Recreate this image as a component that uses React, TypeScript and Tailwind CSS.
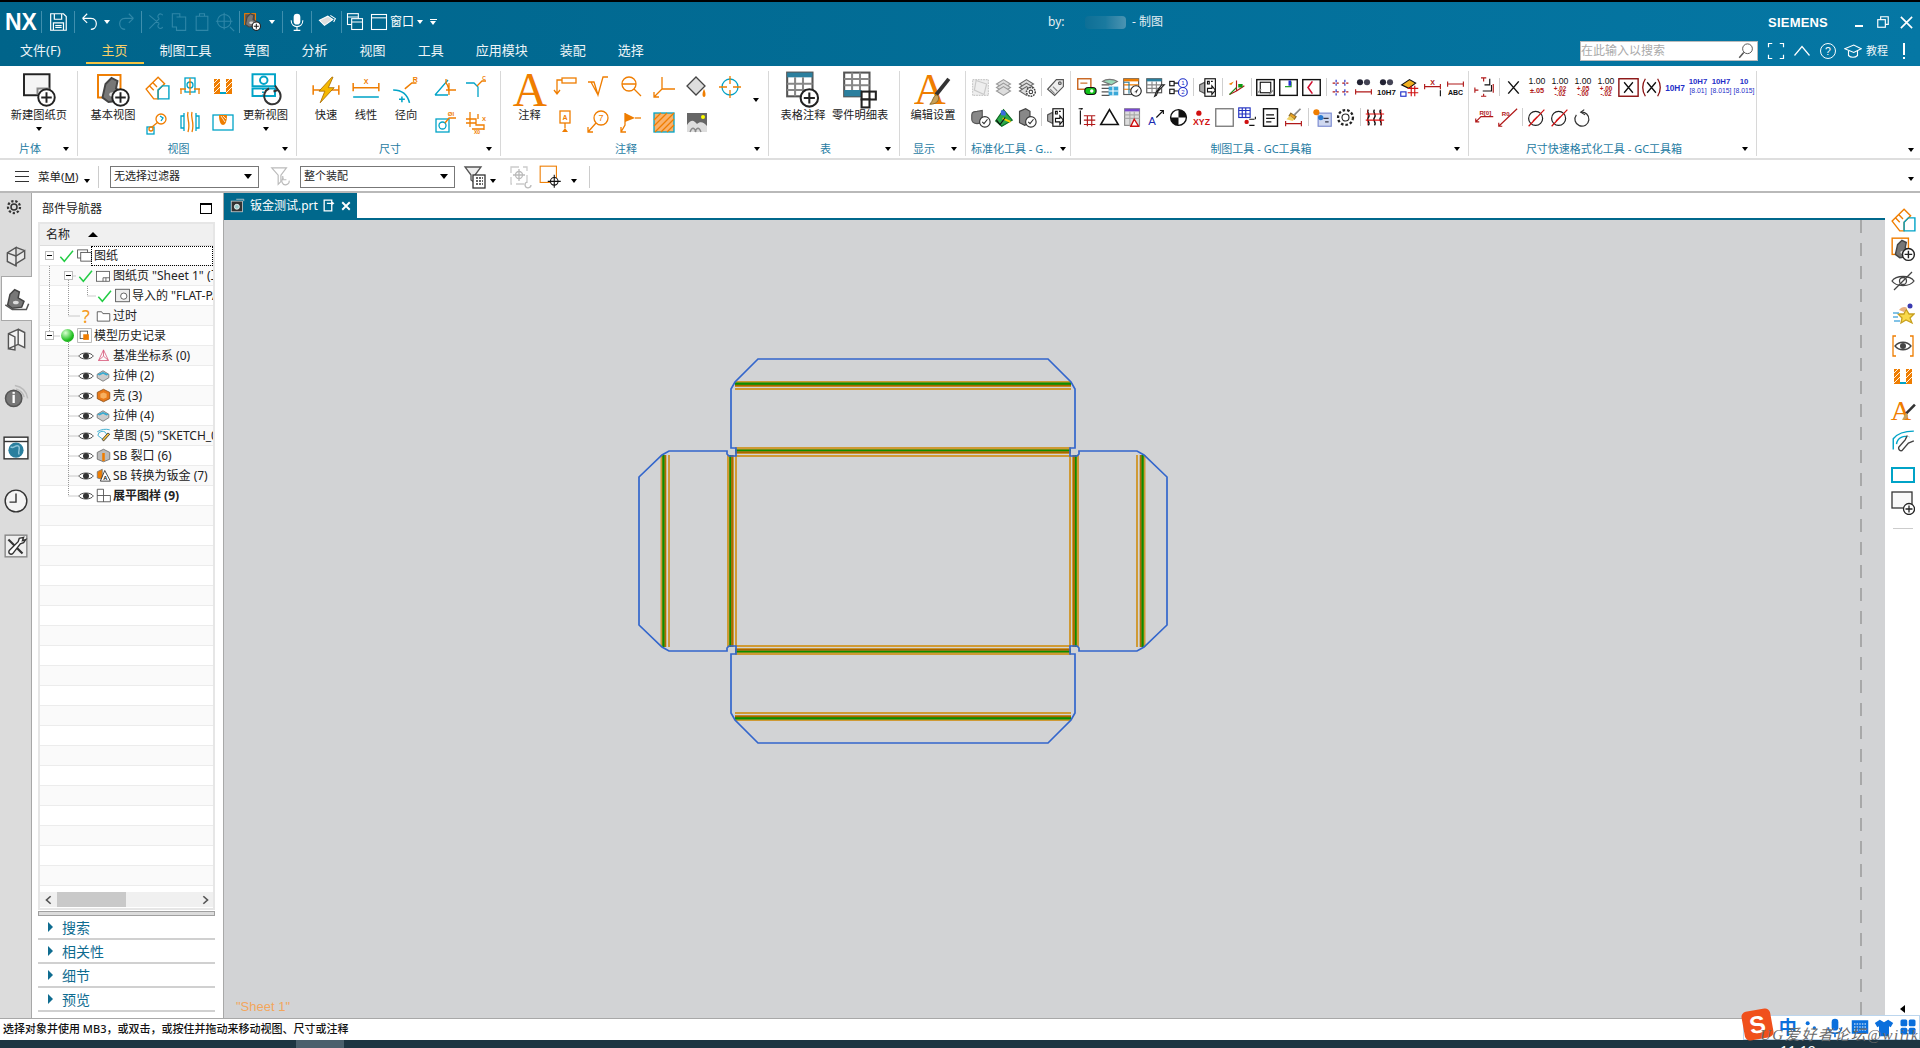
import type { ReactNode } from "react";

const OR = "#ef7d00";
const CY = "#00a3c7";
const RD = "#b01818";
const BL = "#1f2fc8";

function S({ s = 24, w, h, vb = 24, children }: { s?: number; w?: number; h?: number; vb?: number; children: ReactNode }) {
  return (
    <svg width={w ?? s} height={h ?? s} viewBox={`0 0 ${vb} ${vb}`} fill="none" strokeWidth={1.3} className="shrink-0">
      {children}
    </svg>
  );
}

function Tx({ x, y, size = 7, fill = "#111", bold = true, serif, children }: { x: number; y: number; size?: number; fill?: string; bold?: boolean; serif?: boolean; children: ReactNode }) {
  return (
    <text x={x} y={y} fontSize={size} fill={fill} fontWeight={bold ? 700 : 400} textAnchor="middle" fontFamily={serif ? "Liberation Serif, serif" : "Liberation Sans, sans-serif"}>
      {children}
    </text>
  );
}

function Plus({ cx = 17, cy = 17, r = 6 }: { cx?: number; cy?: number; r?: number }) {
  return (
    <g>
      <circle cx={cx} cy={cy} r={r} fill="#fff" stroke="#222" />
      <path d={`M${cx - r + 2} ${cy}H${cx + r - 2}M${cx} ${cy - r + 2}V${cy + r - 2}`} stroke="#222" />
    </g>
  );
}

function Part({ x = 0, y = 0 }: { x?: number; y?: number }) {
  return (
    <g transform={`translate(${x} ${y})`}>
      <path d="M3 15 L5 6 L9 2 L13 4 L12 9 L17 12 L15 17 L7 18Z" fill="#777" stroke="#444" />
      <ellipse cx="10" cy="13" rx="2.5" ry="1.5" fill="#ddd" />
    </g>
  );
}

function Tri({ color = "border-t-black" }: { color?: string }) {
  return <span className={`inline-block w-0 h-0 border-x-[3px] border-t-[4px] border-x-transparent ${color}`} />;
}

// ---- top bar icons
const Sav = (
  <S s={22}>
    <path d="M4 3H18L21 6V21H4Z M8 3V9H16V3 M7 21V13H18V21 M9 16H16M9 18H16" stroke="#fff" />
  </S>
);
const Undo = (c: string, flip = false) => (
  <S s={22}>
    <path d={flip ? "M19 8L14 3M19 8L14 13M19 8H10C5 8 4 12 4 14C4 18 7 20 10 20" : "M5 8L10 3M5 8L10 13M5 8H14C19 8 20 12 20 14C20 18 17 20 14 20"} stroke={c} />
  </S>
);
const dim = "#2f87a8";

// ---- ribbon big icons
const NewSheet = (
  <S s={36}>
    <rect x="2" y="1.5" width="17" height="14" fill="#f4f4f4" stroke="#222" />
    <path d="M11 15V11H19" stroke="#888" />
    <Plus cx={17} cy={17} r={5.5} />
  </S>
);
const BaseView = (
  <S s={36}>
    <rect x="2" y="2" width="15" height="15" stroke={OR} />
    <Part x={2} y={2} />
    <Plus cx={17} cy={17} r={5.5} />
  </S>
);
const Update = (
  <S s={36}>
    <rect x="3" y="1.5" width="15" height="8" stroke={CY} />
    <circle cx="10.5" cy="5.5" r="2.5" stroke={CY} />
    <rect x="3" y="11" width="15" height="5" stroke={CY} />
    <path d="M10 11V16" stroke={CY} strokeDasharray="1 1" />
    <path d="M20 12A5.5 5.5 0 1 1 14 11M18 9L20 12L17 13" stroke="#333" />
  </S>
);
const Rapid = (
  <S w={32} h={28}>
    <path d="M1 12H23M1 8V16M23 8V16" stroke={OR} />
    <path d="M17 1L6 13H11L7 23L19 10H14L18 1Z" fill="#f5b800" stroke="#a86b00" strokeWidth="0.7" />
  </S>
);
const Linear = (
  <S w={32} h={28}>
    <path d="M1 10H23M1 6V13M23 6V13" stroke={OR} />
    <path d="M1 18H23" stroke={CY} />
    <Tx x={12} y={7} size={6} fill={OR}>X</Tx>
  </S>
);
const Radial = (
  <S w={32} h={28}>
    <path d="M1 12C8 12 13 15 15 23" stroke={CY} />
    <path d="M6 20H11M8.5 17.5V22.5" stroke={CY} />
    <path d="M11 11L17 6H21" stroke={OR} />
    <Tx x={20} y={5} size={6} fill={OR}>R</Tx>
  </S>
);
const BigA = (
  <S s={38}>
    <Tx x={12} y={22} size={30} fill={OR} bold={false} serif>A</Tx>
  </S>
);
const TableNote = (
  <S s={38}>
    <rect x="2" y="1" width="16" height="15" fill="#fff" stroke="#555" />
    <rect x="2" y="1" width="16" height="3" fill="#2b7f9e" />
    <path d="M2 8H18M2 12H18M7 4V16M12 4V16" stroke="#888" />
    <Plus cx={16} cy={17} r={5.5} />
  </S>
);
const PartsList = (
  <S s={38}>
    <rect x="2" y="1" width="16" height="15" fill="#fff" stroke="#555" />
    <path d="M2 5H18M2 9H18M7 1V13M12 1V13" stroke="#888" />
    <rect x="2" y="12" width="11" height="4" fill="#2b7f9e" />
    <rect x="13" y="13" width="9" height="5" fill="#fff" stroke="#222" />
    <rect x="13" y="18" width="5" height="5" fill="#fff" stroke="#222" />
    <path d="M18 13V18" stroke="#222" />
  </S>
);
const EditSet = (
  <S s={38}>
    <Tx x={10} y={21} size={28} fill={OR} bold={false} serif>A</Tx>
    <path d="M22 5L14 15" stroke="#333" strokeWidth="2.4" />
    <path d="M14 15C12 16 12 19 10 21C14 21 16 19 15.5 16Z" fill="#c9a25a" stroke="#8a6a2a" strokeWidth="0.6" />
  </S>
);

// ---- ribbon small icons
const I = {
  fold: (
    <S s={26}>
      <path d="M2 13L13 2L19 8L13 14V22H9Z" stroke={OR} />
      <path d="M5 10L9 14M8 7L12 11" stroke={OR} />
      <path d="M13 22V14L17 10H23V22Z" stroke={CY} />
    </S>
  ),
  sect: (
    <S>
      <rect x="7" y="3" width="10" height="14" stroke={CY} />
      <circle cx="12" cy="10" r="3" stroke={CY} />
      <path d="M2 14H8M16 14H22M3 14V19M21 14V19M12 3V20" stroke={OR} />
    </S>
  ),
  hatch: (
    <S>
      <rect x="3" y="4" width="18" height="15" fill={OR} />
      <rect x="9" y="4" width="6" height="15" fill="#fff" />
      <rect x="9" y="17" width="6" height="2" fill={CY} />
      <path d="M3 8L7 4M3 13L9 7M3 18L9 12M15 8L19 4M15 13L21 7M15 18L21 12" stroke="#fff" strokeWidth="0.9" />
    </S>
  ),
  detail: (
    <S>
      <rect x="2" y="15" width="7" height="7" stroke={CY} />
      <circle cx="6" cy="17" r="2" stroke={OR} />
      <path d="M7 15L13 10" stroke={OR} />
      <circle cx="16" cy="7" r="5" stroke={OR} />
      <path d="M15 4L18 6L16 9" stroke={CY} />
    </S>
  ),
  brk: (
    <S>
      <path d="M6 6H3V18H6M18 6H21V18H18" stroke={CY} />
      <path d="M6 3V21M18 3V21" stroke={CY} />
      <path d="M10 2C8 8 13 12 10 22M14 2C12 8 17 12 14 22" stroke={OR} />
    </S>
  ),
  local: (
    <S>
      <rect x="2" y="5" width="20" height="15" stroke={CY} />
      <path d="M8 5C8 12 10 15 12 15C14 15 16 12 16 5Z" fill={OR} />
      <path d="M10 6L14 12M12 6L15 9" stroke="#fff" strokeWidth="0.8" />
    </S>
  ),
  angle: (
    <S>
      <path d="M2 20L15 5M2 20H15" stroke={CY} />
      <path d="M13 8C16 11 16 15 16 20M13 4V9M13 15H23M16 8V19" stroke={OR} />
    </S>
  ),
  chamfer: (
    <S>
      <path d="M2 8H10L14 12V22" stroke={CY} />
      <path d="M13 11L18 6H22" stroke={OR} />
      <Tx x={20} y={5} size={5} fill={OR}>C</Tx>
    </S>
  ),
  hole: (
    <S>
      <rect x="3" y="9" width="13" height="13" stroke={CY} />
      <circle cx="9.5" cy="15.5" r="3.5" stroke={CY} />
      <path d="M12 13L16 8H23" stroke={OR} />
      <Tx x={18} y={6} size={6} fill={OR}>ØI</Tx>
    </S>
  ),
  chain: (
    <S>
      <path d="M6 2V17M2 9H12V15H20V20M2 13H12M14 4V9M8 19H20" stroke={OR} />
      <Tx x={20} y={11} size={6} fill={OR}>X</Tx>
      <Tx x={13} y={24} size={5} fill={OR}>X0</Tx>
    </S>
  ),
  leader: (
    <S>
      <rect x="9" y="3" width="14" height="5" stroke={OR} />
      <path d="M9 5H4V19M1 15L4 19L7 15" stroke={OR} />
    </S>
  ),
  rough: (
    <S>
      <path d="M2 7H8L12 20L17 2H22M5 7L12 20" stroke={OR} />
    </S>
  ),
  mag: (
    <S>
      <circle cx="10" cy="9" r="7" stroke={OR} />
      <path d="M3 9H17M15 14L22 21" stroke={OR} />
    </S>
  ),
  datum: (
    <S>
      <path d="M10 2V14H23M10 14L2 22M2 17V22H7" stroke={OR} />
    </S>
  ),
  fill: (
    <S>
      <path d="M11 2L20 11L11 20L2 11Z" fill="#ddd" stroke="#444" />
      <path d="M19 14C17 18 17 22 19 22C21 22 21 18 19 14Z" fill={OR} />
    </S>
  ),
  target: (
    <S>
      <circle cx="12" cy="12" r="8" stroke={CY} />
      <path d="M1 12H9M15 12H23M12 1V9M12 15V23" stroke={OR} />
    </S>
  ),
  aflag: (
    <S>
      <rect x="7" y="1" width="10" height="12" stroke={OR} />
      <Tx x={12} y={10} size={7} fill={OR}>A</Tx>
      <path d="M12 13V18" stroke={OR} />
      <path d="M9 22L12 18L15 22Z" fill={OR} />
    </S>
  ),
  bal: (
    <S>
      <circle cx="15" cy="8" r="7" stroke={OR} />
      <Tx x={15} y={11} size={9} fill={OR} bold={false}>7</Tx>
      <path d="M10 13L2 22M2 17V22H7" stroke={OR} />
    </S>
  ),
  flag: (
    <S>
      <path d="M6 3V15L2 22M2 17V22H7" stroke={OR} />
      <path d="M6 3L16 8L6 12Z" fill={OR} />
      <path d="M16 8H22" stroke={OR} />
    </S>
  ),
  hatchBox: (
    <S>
      <rect x="2" y="3" width="20" height="19" fill="#f9b26c" stroke={CY} />
      <path d="M2 10L9 3M2 16L15 3M3 22L22 3M9 22L22 9M15 22L22 15" stroke={OR} />
    </S>
  ),
  image: (
    <S>
      <rect x="2" y="3" width="20" height="19" fill="#666" />
      <circle cx="18" cy="7" r="2" fill="#ff0" />
      <path d="M2 22V15C6 9 9 10 12 14C15 11 19 12 22 16V22Z" fill="#ddd" />
      <path d="M5 22C7 17 9 17 11 22M10 22C12 17 14 17 16 22" stroke="#888" />
    </S>
  ),
};

const g1 = "#c9c9c9";
const Stack = (n = 3, c = "#999") => (
  <g>
    {Array.from({ length: n }).map((_, i) => (
      <path key={i} d={`M12 ${3 + i * 4}L20 ${8 + i * 4}L12 ${13 + i * 4}L4 ${8 + i * 4}Z`} fill="#ddd" stroke={c} />
    ))}
  </g>
);
const Clip = (
  <S s={21}>
    <rect x="3" y="3" width="18" height="18" fill="#eee" stroke={g1} strokeDasharray="2 1" />
    <path d="M7 4L19 8L16 20L5 15Z" stroke={g1} />
  </S>
);
const Cog = (x: number, y: number) => (
  <g>
    <circle cx={x} cy={y} r="5" fill="#fff" stroke="#444" strokeWidth="1.8" strokeDasharray="2 1" />
    <circle cx={x} cy={y} r="2" stroke="#444" />
  </g>
);
const ChkB = (
  <g>
    <circle cx="17" cy="17" r="6" fill="#fff" stroke="#333" />
    <path d="M14 17L16 19L20 14" stroke="#333" />
  </g>
);
const Doc2 = (
  <S s={21}>
    <path d="M3 9L9 6V19L3 16Z" fill="#aaa" stroke="#555" />
    <rect x="9" y="2" width="12" height="20" fill="#fff" stroke="#111" />
    <path d="M12 13H17V10L21 15L17 20V17H12Z" fill="#fff" stroke="#111" />
    <path d="M12 5H14V8H12ZM16 5H18" stroke="#111" />
  </S>
);
const Gun = (
  <g>
    <path d="M2 9C2 5 6 5 8 5L14 4V18L8 19C4 19 2 17 2 14Z" fill="#888" stroke="#555" />
    {ChkB}
  </g>
);

const std1: ReactNode[] = [
  Clip,
  <S s={21} key="a">{Stack(3)}</S>,
  <S s={21} key="b">
    {Stack(3, "#666")}
    {Cog(17, 17)}
  </S>,
  "sep",
  <S s={21} key="c">
    <path d="M3 14L13 3H21V11L11 21Z" fill="#eee" stroke="#555" />
    <path d="M6 14L11 19M9 11L14 16" stroke="#888" />
    <circle cx="17" cy="7" r="1.5" stroke="#555" />
  </S>,
];
const std2: ReactNode[] = [
  <S s={21} key="a">{Gun}</S>,
  <S s={21} key="b">
    <path d="M3 16L12 3L22 15L10 22Z" fill="#2aa84a" stroke="#0a6a20" />
    <path d="M9 4C13 3 16 6 14 10L9 9Z" fill="#3a6ae0" />
    <path d="M11 13L20 17" stroke="#f5d000" strokeWidth="2" />
    <path d="M4 15L8 20L14 12" stroke="#111" />
  </S>,
  <S s={21} key="c">
    <path d="M4 5L11 2L16 5V18L10 21L4 18Z" fill="#888" stroke="#444" />
    {ChkB}
  </S>,
  "sep",
  <span key="d">{Doc2}</span>,
];

const G = (p: ReactNode) => <S s={21}>{p}</S>;
const frame = (c: ReactNode) => (
  <S s={21}>
    <rect x="2" y="3" width="20" height="18" fill="#fff" stroke="#111" strokeWidth="1.6" />
    {c}
  </S>
);
const Bino = (
  <g>
    <circle cx="8" cy="6" r="3.5" fill="#223" />
    <circle cx="16" cy="6" r="3.5" fill="#445" />
  </g>
);
const Dm = (y: number) => <path d={`M3 ${y}H21M3 ${y - 3}V${y + 3}M21 ${y - 3}V${y + 3}`} stroke={RD} />;

const gc1: ReactNode[] = [
  G(<g><rect x="2" y="2" width="15" height="12" fill="#fff" stroke="#c8641e" strokeWidth="1.6" /><path d="M5 7H13" stroke="#c8641e" /><rect x="10" y="12" width="13" height="8" rx="4" fill="#12c21a" stroke="#111" /><circle cx="18" cy="16" r="2" fill="#fff" /></g>),
  G(<g><path d="M4 5C8 2 16 2 21 5L14 9Z" fill="#9ad8b8" stroke="#777" /><path d="M3 9H12M3 13H12M3 17H12M3 21H12" stroke="#555" /><rect x="11" y="11" width="11" height="10" fill="#3aa8d8" /><path d="M11 16H22M16 11V21" stroke="#fff" /></g>),
  G(<g><rect x="2" y="2" width="17" height="18" fill="#fff" stroke="#555" /><rect x="2" y="2" width="17" height="3" fill={OR} /><path d="M2 9H19M2 14H19" stroke={OR} /><path d="M2 6H8V19" stroke="#2b7f9e" /><circle cx="16" cy="16" r="6" fill="#fff" stroke="#222" /><path d="M13 18L19 13L16 19L15.5 16.5Z" fill="#333" /></g>),
  G(<g><rect x="2" y="2" width="17" height="16" fill="#fff" stroke="#555" /><rect x="2" y="2" width="17" height="3" fill="#2b7f9e" /><path d="M2 9H19M2 13H19M8 5V18M13 5V18" stroke="#888" /><path d="M22 9L15 16L13 21L11 22L13 17L19 9Z" fill="#fff" stroke="#222" /></g>),
  G(<g><rect x="2" y="5" width="5" height="5" stroke="#111" /><rect x="2" y="14" width="5" height="5" stroke="#111" /><path d="M7 7H12M7 16H12" stroke="#111" /><circle cx="17" cy="7" r="5" stroke={BL} /><circle cx="17" cy="17" r="5" stroke={BL} /><Tx x={17} y={9.5} size={7} fill={BL} bold={false}>1</Tx><Tx x={17} y={19.5} size={7} fill={BL} bold={false}>2</Tx></g>),
  "sep",
  Doc2,
  "sep",
  G(<g><path d="M3 8L9 5L6 9Z" fill={OR} /><path d="M12 4V16M12 16L4 20M12 16L21 10" stroke={RD} /><rect x="14" y="8" width="5" height="4" fill="#0a9a10" /><path d="M4 20L12 12" stroke="#1a8a1a" /></g>),
  "sep",
  frame(<g><rect x="6" y="6" width="12" height="12" stroke="#111" /><path d="M3 18L7 14M16 20L21 15" stroke="#888" /></g>),
  frame(<g><path d="M15 5L15 11H8" stroke="#2ba02b" /><rect x="12" y="4" width="3" height="6" fill="#2030d0" /></g>),
  frame(<path d="M13 5L8 12L13 19" stroke="#d01030" strokeWidth="1.8" />),
  "sep",
  G(<g><path d="M3 7H10M14 7H21M3 17H10M14 17H21" stroke={RD} strokeDasharray="3 1.5" /><path d="M7 3V10M17 3V10M7 14V21M17 14V21" stroke={BL} strokeDasharray="3 1.5" /></g>),
  G(<g>{Bino}{Dm(17)}</g>),
  G(<g>{Bino}<Tx x={12} y={21} size={9}>10H7</Tx></g>),
  G(<g><path d="M3 9L12 3L19 7L11 13Z" fill="#f0b020" stroke="#111" /><path d="M14 10V22M18 10V22M10 13H22M10 18H22" stroke="#d01010" /><rect x="2" y="17" width="6" height="5" stroke={BL} /></g>),
  G(<g>{Dm(11)}<Tx x={12} y={9} size={8} fill={RD}>X</Tx><path d="M21 15V22" stroke="#111" /></g>),
  G(<g>{Dm(8)}<Tx x={12} y={21} size={8}>ABC</Tx></g>),
];
const gc2: ReactNode[] = [
  G(<g><path d="M6 1V3M3 2H8M5 4V20" stroke="#111" /><path d="M9 10H22M9 15H22M9 20H22M13 10V22M18 10V22" stroke={RD} /></g>),
  G(<path d="M12 3L22 20H2Z" fill="#fff" stroke="#111" strokeWidth="1.8" />),
  G(<g><rect x="3" y="2" width="17" height="19" fill="#ddd" stroke="#888" /><rect x="3" y="2" width="17" height="3" fill="#7a4ad0" /><path d="M3 9H20M3 13H20M9 5V21M14 5V21" stroke="#aaa" /><path d="M14 14L19 22H10Z" fill="#fff" stroke="#d01010" strokeWidth="1.6" /></g>),
  G(<g><Tx x={8} y={21} size={13} fill="#1a2ab0" bold={false}>A</Tx><path d="M13 12L21 4M17 4H21V8" stroke="#111" /></g>),
  G(<g><circle cx="12" cy="12" r="9" fill="#fff" stroke="#111" strokeWidth="1.6" /><path d="M12 12V3A9 9 0 0 1 21 12ZM12 12V21A9 9 0 0 1 3 12Z" fill="#111" /></g>),
  G(<g><circle cx="9" cy="7" r="3" fill="#d01010" /><Tx x={12} y={20} size={10} fill="#d01010">XYZ</Tx></g>),
  G(<rect x="2" y="2" width="20" height="20" fill="#fff" stroke="#777" strokeWidth="1.5" />),
  G(<g><rect x="2" y="1" width="13" height="11" fill="#fff" stroke="#2030c0" /><path d="M2 4H15M2 8H15M6 1V12M10 1V12" stroke="#2030c0" /><circle cx="11" cy="17" r="2.5" fill="#d01010" /><path d="M14 14H20M14 21H20M21 11V14" stroke="#111" /></g>),
  G(<g><rect x="4" y="2" width="16" height="20" fill="#fff" stroke="#111" strokeWidth="1.6" /><path d="M7 9H16M7 13H17M7 17H13" stroke="#111" /></g>),
  G(<g><path d="M20 2L13 9" stroke="#888" strokeWidth="2" /><path d="M9 7L15 11L13 14L7 10Z" fill="#e8a020" stroke="#8a6a2a" /><path d="M8 10L4 14L11 16L13 14Z" fill="#f0d060" />{Dm(19)}</g>),
  "sep",
  G(<g><rect x="7" y="7" width="15" height="15" fill="#cfd8f0" stroke="#7a8ad0" /><path d="M13 13H19M15 17H19" stroke="#334" /><circle cx="5" cy="6" r="3.5" fill={OR} /><circle cx="10" cy="12" r="3" fill="#2a7ad0" /></g>),
  G(<g><circle cx="12" cy="12" r="4" stroke="#222" /><circle cx="12" cy="12" r="8.5" stroke="#222" strokeWidth="2.6" strokeDasharray="3 2.2" /></g>),
  "sep",
  G(<g><path d="M5 3C2 6 8 9 5 12C2 15 8 18 5 21M12 3C9 6 15 9 12 12C9 15 15 18 12 21M19 3C16 6 22 9 19 12C16 15 22 18 19 21" stroke="#111" strokeWidth="1.6" /><path d="M2 8H23M2 15H23" stroke="#e01010" /><path d="M4 3V21M20 3V21" stroke="#e01010" strokeWidth="0.6" /></g>),
];

const Tol = (a: string, b: string, c?: string) => (
  <S s={22}>
    <Tx x={12} y={9} size={9.5} bold={false}>{a}</Tx>
    {c ? (
      <>
        <Tx x={12} y={16} size={7} fill={RD}>{b}</Tx>
        <Tx x={12} y={22} size={7} fill={RD}>{c}</Tx>
      </>
    ) : (
      <Tx x={12} y={18} size={8} fill={RD}>{b}</Tx>
    )}
  </S>
);
const Fit = (a: string, b: string) => (
  <S s={22}>
    <Tx x={12} y={9} size={8.5} fill={BL}>{a}</Tx>
    <Tx x={12} y={19} size={7.5} fill={BL} bold={false}>{b}</Tx>
  </S>
);
const Dia = (
  <g>
    <circle cx="11" cy="13" r="8" fill="#fff" stroke="#222" strokeWidth="1.4" />
    <path d="M3 22L21 3M13 11L8 16" stroke="#d01010" strokeWidth="1.4" />
  </g>
);

const dim1: ReactNode[] = [
  G(<g><path d="M12 9H18V2M10 16H20V9" stroke="#111" /><path d="M8 1H14M11 1V5M8 22H14M11 19V22M1 12V18M22 8V18M1 15H5" stroke={RD} /></g>),
  "sep",
  G(<path d="M6 5L18 19M18 5L6 19" stroke="#111" strokeWidth="1.7" />),
  Tol("1.00", "±.05"),
  Tol("1.00", "+.02", "-.02"),
  Tol("1.00", "+.05", "-.00"),
  Tol("1.00", "+.00", "-.02"),
  G(<g><rect x="1" y="2" width="22" height="20" fill="#fff" stroke="#8a1010" strokeWidth="1.6" /><path d="M7 6L17 18M17 6L7 18" stroke="#111" strokeWidth="1.5" /></g>),
  G(<g><path d="M5 2C1 8 1 16 5 22M19 2C23 8 23 16 19 22" stroke="#8a1010" strokeWidth="1.5" /><path d="M7 6L17 18M17 6L7 18" stroke="#111" strokeWidth="1.5" /></g>),
  <S s={22} key="f"><Tx x={12} y={16} size={9} fill={BL}>10H7</Tx></S>,
  Fit("10H7", "[8.01]"),
  Fit("10H7", "[8.015]"),
  Fit("10", "[8.015]"),
];
const dim2: ReactNode[] = [
  G(<g><Tx x={13} y={9} size={7} fill={RD}>R[0]</Tx><path d="M22 11H8L2 17M2 13V17H6" stroke={RD} /></g>),
  G(<g><Tx x={10} y={10} size={7} fill={RD}>R0</Tx><path d="M23 2L2 22M2 18V22H6" stroke={RD} /></g>),
  "sep",
  G(Dia),
  G(Dia),
  G(<g><path d="M14 3L10 6L15 9" stroke="#333" /><path d="M10 6A8 8 0 1 1 5 9" stroke="#333" strokeWidth="1.4" /></g>),
];

function Slot({ items }: { items: ReactNode[] }) {
  return (
    <div className="flex items-center h-[24px]">
      {items.map((it, i) =>
        it === "sep" ? (
          <div key={i} className="w-px h-[18px] bg-[#cfcfcf] mx-[2.5px]" />
        ) : (
          <div key={i} className="w-[23px] flex justify-center">
            {it}
          </div>
        ),
      )}
    </div>
  );
}

function Group({ w, label, children }: { w: string; label: string; children: ReactNode }) {
  return (
    <div className={`${w} h-[85px] flex flex-col border-r border-[#d8d8d8] shrink-0`}>
      <div className="h-[71px] flex">{children}</div>
      <div className="h-[14px] flex items-center">
        <span className="flex-1 pl-[5px] text-center text-[11px] leading-[14px] text-[#1f7ca3] whitespace-nowrap">{label}</span>
        <span className="w-[22px] flex justify-center shrink-0">
          <Tri />
        </span>
      </div>
    </div>
  );
}

function Big({ w, label, arrow, children }: { w: string; label: string; arrow?: boolean; children: ReactNode }) {
  return (
    <div className={`${w} flex flex-col items-center shrink-0`}>
      <div className="h-[37px] flex items-center justify-center">{children}</div>
      <div className="text-[11.25px] leading-[14px] whitespace-nowrap text-[#222]">{label}</div>
      {arrow && (
        <div className="mt-[3px] leading-[0]">
          <Tri />
        </div>
      )}
    </div>
  );
}

function Col({ w = "w-[33px]", children }: { w?: string; children: ReactNode }) {
  return <div className={`${w} flex flex-col items-center pt-[4px] gap-[11px] shrink-0`}>{children}</div>;
}

function Sep() {
  return <div className="w-px h-[22px] bg-[#3f8fae] shrink-0" />;
}

function TopBar() {
  const menus = ["草图", "分析", "视图", "工具", "应用模块", "装配", "选择"];
  return (
    <div className="h-[64px] bg-gradient-to-r from-[#00648a] to-[#0577a4] text-white shrink-0">
      <div className="h-[32px] flex items-center pl-[5px] pt-[8px]">
        <div className="w-[32px] text-[23px] font-bold leading-none font-['Liberation_Sans',sans-serif]">NX</div>
        <div className="ml-[4px]"><Sep /></div>
        <div className="w-[32px] flex justify-center">{Sav}</div>
        <Sep />
        <div className="w-[27px] flex justify-center">{Undo("#fff")}</div>
        <div className="w-[10px] flex justify-center"><Tri color="border-t-white" /></div>
        <div className="w-[29px] flex justify-center">{Undo(dim, true)}</div>
        <Sep />
        <div className="ml-[2px] w-[23px] flex justify-center">
          <S s={20}><path d="M4 4L16 14M4 20L16 8M16 14A3 3 0 1 0 20 18M16 8A3 3 0 1 1 20 4" stroke={dim} /></S>
        </div>
        <div className="w-[23px] flex justify-center">
          <S s={20}><path d="M4 2H13V6H20V22H9V18H4ZM9 6H13" stroke={dim} /></S>
        </div>
        <div className="w-[23px] flex justify-center">
          <S s={20}><path d="M5 5H19V22H5ZM9 5V2H15V5" stroke={dim} /></S>
        </div>
        <div className="w-[23px] flex justify-center">
          <S s={20}><circle cx="11" cy="11" r="8" stroke={dim} /><path d="M11 1V21M1 11H21M18 18L23 23" stroke={dim} /></S>
        </div>
        <div className="ml-[3px]"><Sep /></div>
        <div className="w-[26px] flex justify-center">
          <S s={20}><rect x="2" y="2" width="13" height="13" fill="#555" stroke={OR} /><Part x={0} y={0} /><Plus cx={16} cy={17} r={5} /></S>
        </div>
        <div className="w-[12px] flex justify-center"><Tri color="border-t-white" /></div>
        <div className="ml-[4px]"><Sep /></div>
        <div className="w-[28px] flex justify-center">
          <S s={20}><rect x="8" y="2" width="8" height="13" rx="4" fill="#fff" /><path d="M5 10C5 20 19 20 19 10M12 18V22M8 22H16" stroke="#fff" /></S>
        </div>
        <Sep />
        <div className="w-[29px] flex justify-center">
          <S s={20}><path d="M3 10L13 5L19 9L9 16Z" fill="#ddd" stroke="#fff" /><path d="M16 4L22 8L20 12" stroke="#fff" /></S>
        </div>
        <Sep />
        <div className="w-[26px] flex justify-center">
          <S s={20}><rect x="3" y="2" width="13" height="13" stroke="#fff" /><rect x="8" y="8" width="13" height="13" fill="#00678d" stroke="#fff" /><path d="M3 6H16M8 12H21" stroke="#fff" /></S>
        </div>
        <div className="w-[22px] flex justify-center">
          <S s={20}><rect x="3" y="3" width="18" height="18" stroke="#fff" /><path d="M3 7H21" stroke="#fff" /></S>
        </div>
        <div className="w-[24px] text-[12px] whitespace-nowrap">窗口</div>
        <div className="w-[12px] flex justify-center"><Tri color="border-t-white" /></div>
        <div className="w-[14px] flex flex-col items-center gap-[1px]">
          <div className="w-[7px] h-px bg-white" />
          <Tri color="border-t-white" />
        </div>
        <div className="ml-[608px] flex items-center text-[12px] text-[#e4eef3]">
          <span className="w-[37px]">by:</span>
          <span className="w-[41px] h-[13px] rounded-[4px] bg-gradient-to-r from-[#0d6f96] via-[#1a7a9f] to-[#4a94b2]" />
          <span className="ml-[6px] whitespace-nowrap">- 制图</span>
        </div>
        <div className="ml-auto flex items-center pr-[3px]">
          <span className="text-[13px] font-bold font-['Liberation_Sans',sans-serif] tracking-[0.2px] pt-[2px]">SIEMENS</span>
          <div className="ml-[20px] w-[22px] flex justify-center pt-[8px]"><div className="w-[8px] h-[2px] bg-white" /></div>
          <div className="ml-[2px] w-[22px] flex justify-center">
            <S s={14}><rect x="3" y="8" width="13" height="13" stroke="#fff" strokeWidth="2" /><path d="M8 8V3H21V16H16" stroke="#fff" strokeWidth="2" /></S>
          </div>
          <div className="ml-[1px] w-[22px] flex justify-center">
            <S s={15}><path d="M3 3L21 21M21 3L3 21" stroke="#fff" strokeWidth="2.6" /></S>
          </div>
        </div>
      </div>
      <div className="h-[32px] flex pl-[20px] text-[13px] text-[#eef5f8]">
        <div className="flex items-center pt-[2px] mr-[25px]">文件(F)</div>
        <div className="flex items-center justify-center w-[58px] pt-[6px] mb-[2px] border-b-2 border-[#f5c342] text-[#f7cf6a] mr-[16px]">主页</div>
        <div className="flex items-center pt-[2px]">制图工具</div>
        {menus.map((m) => (
          <div key={m} className="flex items-center pt-[2px] ml-[32px]">
            {m}
          </div>
        ))}
        <div className="ml-auto flex items-center pt-[2px]">
          <div className="w-[178px] h-[20px] bg-white border border-[#bbb] flex items-center justify-between text-[12px] text-[#aaa] pr-[2px]">
            <span>在此输入以搜索</span>
            <S s={18}><circle cx="14" cy="9" r="6.5" stroke="#555" /><path d="M9 14L3 21" stroke="#555" strokeWidth="2" /></S>
          </div>
          <div className="ml-[5px] w-[26px] flex justify-center">
            <S s={18}><path d="M2 7V2H7M17 2H22V7M2 17V22H7M17 22H22V17" stroke="#fff" strokeWidth="1.6" /></S>
          </div>
          <div className="w-[26px] flex justify-center">
            <S s={18}><path d="M2 18L12 6L22 18" stroke="#fff" strokeWidth="1.6" /></S>
          </div>
          <div className="w-[25px] flex justify-center">
            <S s={18}>
              <circle cx="12" cy="12" r="10" stroke="#fff" />
              <Tx x={12} y={17} size={14} fill="#fff" bold={false}>?</Tx>
            </S>
          </div>
          <div className="w-[26px] flex justify-center">
            <S s={18}><path d="M1 9L13 4L23 9L13 14Z M6 12V18C9 21 15 21 18 18V12" stroke="#fff" strokeWidth="1.5" /></S>
          </div>
          <div className="w-[22px] text-[11px] whitespace-nowrap">教程</div>
          <div className="w-[32px] flex flex-col items-center justify-center">
            <div className="w-[2px] h-[12px] bg-white" />
            <div className="w-[2px] h-[2px] bg-white mt-[2px]" />
          </div>
        </div>
      </div>
    </div>
  );
}

function Ribbon() {
  return (
    <div className="h-[94px] pt-[5px] bg-white border-b-2 border-[#dedede] flex shrink-0 text-[#222]">
      <Group w="w-[78px]" label="片体">
        <div className="w-[2px]" />
        <Big w="w-[76px]" label="新建图纸页" arrow>{NewSheet}</Big>
      </Group>
      <Group w="w-[219px]" label="视图">
        <div className="w-[8px]" />
        <Big w="w-[54px]" label="基本视图">{BaseView}</Big>
        <Col>{I.fold}{I.detail}</Col>
        <Col>{I.sect}{I.brk}</Col>
        <Col>{I.hatch}{I.local}</Col>
        <Big w="w-[53px]" label="更新视图" arrow>{Update}</Big>
      </Group>
      <Group w="w-[204px]" label="尺寸">
        <div className="w-[9px]" />
        <Big w="w-[40px]" label="快速">{Rapid}</Big>
        <Big w="w-[40px]" label="线性">{Linear}</Big>
        <Big w="w-[40px]" label="径向">{Radial}</Big>
        <Col w="w-[35px] pl-[3px]">{I.angle}{I.hole}</Col>
        <Col w="w-[30px]">{I.chamfer}{I.chain}</Col>
      </Group>
      <Group w="w-[268px]" label="注释">
        <div className="w-[8px]" />
        <Big w="w-[41px]" label="注释">{BigA}</Big>
        <div className="-ml-[2px] flex">
          <Col>{I.leader}{I.aflag}</Col>
          <Col>{I.rough}{I.bal}</Col>
          <Col>{I.mag}{I.flag}</Col>
          <Col>{I.datum}{I.hatchBox}</Col>
          <Col>{I.fill}{I.image}</Col>
          <Col>{I.target}</Col>
          <div className="w-[20px] flex justify-center pt-[13px]">
            <span><Tri /></span>
          </div>
        </div>
      </Group>
      <Group w="w-[131px]" label="表">
        <div className="w-[6px]" />
        <Big w="w-[56px]" label="表格注释">{TableNote}</Big>
        <div className="w-px" />
        <Big w="w-[56px]" label="零件明细表">{PartsList}</Big>
      </Group>
      <Group w="w-[66px]" label="显示">
        <Big w="w-[66px]" label="编辑设置">{EditSet}</Big>
      </Group>
      <Group w="w-[105px]" label="标准化工具 - G...">
        <div className="pl-[3px] pt-[4px] flex flex-col gap-[6px]">
          <Slot items={std1} />
          <Slot items={std2} />
        </div>
      </Group>
      <Group w="w-[398px]" label="制图工具 - GC工具箱">
        <div className="pl-[4px] pt-[4px] flex flex-col gap-[6px]">
          <Slot items={gc1} />
          <Slot items={gc2} />
        </div>
      </Group>
      <Group w="w-[288px]" label="尺寸快速格式化工具 - GC工具箱">
        <div className="pl-[4px] pt-[4px] flex flex-col gap-[6px]">
          <Slot items={dim1} />
          <Slot items={dim2} />
        </div>
      </Group>
      <div className="flex-1 h-[85px] flex items-end justify-end pr-[6px] pb-[4px]">
        <Tri />
      </div>
    </div>
  );
}

function SelectBox({ w, text }: { w: string; text: string }) {
  return (
    <div className={`${w} h-[22px] border border-[#777] bg-white flex items-center justify-between pl-[3px] pr-[6px] text-[11px] text-[#222] shrink-0`}>
      <span>{text}</span>
      <span className="border-x-[4px] border-t-[5px] border-x-transparent border-t-black" />
    </div>
  );
}

function Toolbar() {
  return (
    <div className="h-[33px] pt-[2px] bg-white border-b-2 border-[#b9b9b9] flex items-center shrink-0 text-[#222]">
      <div className="ml-[15px] w-[14px] flex flex-col gap-[4px]">
        <div className="h-px bg-[#333]" />
        <div className="h-px bg-[#333]" />
        <div className="h-px bg-[#333]" />
      </div>
      <div className="ml-[9px] w-[40px] text-[11.5px] whitespace-nowrap">菜单(<span className="underline">M</span>)</div>
      <div className="ml-[6px]"><Tri /></div>
      <div className="ml-[8px] w-px h-[22px] bg-[#ccc]" />
      <div className="ml-[11px]"><SelectBox w="w-[149px]" text="无选择过滤器" /></div>
      <div className="w-[41px] flex justify-center">
        <S s={22}><path d="M3 2H19L13 10V17L10 20V10Z" stroke="#bbb" /><path d="M22 16A4 4 0 1 1 16 13M15 11V15H19" stroke="#bbb" /></S>
      </div>
      <SelectBox w="w-[155px]" text="整个装配" />
      <div className="ml-[8px] w-[24px] flex justify-center">
        <S s={24}><path d="M2 2H18L12 10V18L8 15V10Z" fill="#eee" stroke="#555" /><rect x="10" y="10" width="12" height="13" fill="#fff" stroke="#333" /><path d="M13 13H20M13 16H20M13 19H20" stroke="#333" strokeDasharray="2 1" /></S>
      </div>
      <div className="ml-[3px]"><Tri /></div>
      <div className="ml-[10px] w-[28px] flex justify-center">
        <S s={24}><rect x="3" y="2" width="16" height="17" stroke="#ccc" strokeDasharray="8 4" /><circle cx="11" cy="10" r="3.5" stroke="#bbb" /><path d="M5 10H17M11 4V16" stroke="#bbb" /><path d="M23 20A3 3 0 1 1 19 17" stroke="#bbb" /></S>
      </div>
      <div className="ml-[3px] w-[28px] flex justify-center">
        <S s={26}><rect x="2" y="2" width="15" height="15" stroke={OR} strokeWidth="1" /><circle cx="15" cy="16" r="3.5" fill="#fff" stroke="#111" strokeWidth="1" /><path d="M15 10V22M9 16H21" stroke="#111" strokeWidth="1" /></S>
      </div>
      <div className="ml-[6px]"><Tri /></div>
      <div className="ml-[12px] w-px h-[22px] bg-[#ccc]" />
      <div className="ml-auto pr-[6px] pt-[2px] leading-[0]"><Tri /></div>
    </div>
  );
}

function Strip() {
  return (
    <div className="w-[32px] shrink-0 bg-[#dcdcdc] border-r border-[#a8a8a8] flex flex-col items-center">
      <div className="h-[28px] flex items-center pr-[3px]">
        <S s={18}><circle cx="12" cy="12" r="4" stroke="#333" strokeWidth="2" /><circle cx="12" cy="12" r="8" stroke="#333" strokeWidth="3" strokeDasharray="3 2.5" /></S>
      </div>
      <div className="h-[55px] pt-[13px] flex items-center">
        <S s={26}><path d="M4 10L12 5L12 13L20 8V15L12 20V22L4 18Z" fill="#e8e8e8" stroke="#555" /><path d="M12 5L20 8M4 10L12 13V22" stroke="#555" /></S>
      </div>
      <div className="h-[45px] w-[31px] ml-[1px] -mr-px bg-white border-y border-l border-[#a8a8a8] flex items-center justify-center relative">
        <S s={28}><Part x={1} y={2} /><path d="M2 17L8 21H20L22 16" stroke="#555" /></S>
      </div>
      <div className="h-[36px] flex items-center">
        <S s={26}><path d="M5 7L14 3V17L5 21ZM14 3L20 6V20L14 17M5 7L11 10V22L5 21" fill="#f4f4f4" stroke="#555" /></S>
      </div>
      <div className="mt-[20px] h-[38px] flex items-center">
        <S s={28}>
          <circle cx="10" cy="14" r="7" fill="#777" stroke="#555" />
          <rect x="9" y="11" width="2" height="7" fill="#fff" />
          <rect x="9" y="8.5" width="2" height="1.6" fill="#fff" />
          <path d="M11 3C17 4 21 8 22 14M12 6C15 7 18 9 19 13" stroke="#bbb" />
        </S>
      </div>
      <div className="mt-[14px] h-[38px] flex items-center">
        <S s={26}>
          <rect x="1" y="2" width="22" height="20" fill="#fff" stroke="#333" />
          <path d="M1 6H23" stroke="#333" />
          <circle cx="12" cy="14" r="7" fill="#2a7f9e" />
          <path d="M7 11C10 13 11 9 14 10C17 12 13 15 15 18" stroke="#8cc4d8" />
        </S>
      </div>
      <div className="mt-[15px] h-[38px] flex items-center">
        <S s={26}><circle cx="12" cy="12" r="10" fill="#f4f4f4" stroke="#333" /><path d="M12 5V13H6" stroke="#333" /></S>
      </div>
      <div className="mt-[7px] h-[38px] flex items-center">
        <S s={26}>
          <rect x="2" y="2" width="20" height="20" fill="#eee" stroke="#888" />
          <path d="M5 6L18 19" stroke="#333" strokeWidth="2" />
          <path d="M19 4L15 5L14 8L6 16A2 2 0 1 0 9 19L16 10L19 9L21 6L18 7Z" fill="#fff" stroke="#333" />
        </S>
      </div>
    </div>
  );
}

const Chk = <S s={16}><path d="M2 13L8 20L21 4" stroke="#22cc44" strokeWidth="2.2" /></S>;
const Eye = (
  <S s={16}>
    <path d="M1 12C5 6 19 6 23 12C19 18 5 18 1 12Z" fill="#fff" stroke="#333" />
    <circle cx="12" cy="12" r="4.5" fill="#333" />
  </S>
);
const Sheet = <S s={14}><rect x="1" y="4" width="22" height="17" fill="#fff" stroke="#444" /><path d="M12 21V15H23M17 15V21" stroke="#444" /></S>;

function Row({ pl, box, st, ic, text, bold, alt }: { pl: string; box?: boolean; st: ReactNode; ic: ReactNode; text: string; bold?: boolean; alt?: boolean }) {
  return (
    <div className={`h-[20px] shrink-0 flex items-center border-b border-[#ececec] whitespace-nowrap overflow-hidden ${pl} ${alt ? "bg-[#fafafa]" : "bg-white"}`}>
      {box !== undefined && (
        <div className="w-[16px] flex justify-center shrink-0">
          {box && (
            <div className="w-[9px] h-[9px] border border-[#bbb] bg-white flex items-center justify-center relative z-10">
              <div className="w-[5px] h-px bg-black" />
            </div>
          )}
        </div>
      )}
      <div className="w-[20px] flex justify-center shrink-0 relative z-10">{st}</div>
      <div className="w-[14px] flex justify-center shrink-0">{ic}</div>
      <span className={`ml-[3px] ${bold ? "font-bold" : ""}`}>{text}</span>
    </div>
  );
}

const feat = (
  <S s={14}><path d="M2 9L12 3L22 9V15L12 21L2 15Z" fill="#ccc" stroke="#666" /><path d="M2 9L12 5L22 9L18 11L12 8L6 11Z" fill="#3aaad0" /></S>
);

function Nav() {
  return (
    <div className="w-[192px] shrink-0 bg-white border-r border-[#a8a8a8] pl-[6px] pr-[8px] flex flex-col text-[#222]">
      <div className="h-[29px] flex items-center justify-between pl-[4px] pr-[3px] pt-[2px] shrink-0">
        <span className="text-[12px]">部件导航器</span>
        <div className="w-[12px] h-[11px] border border-black border-t-2" />
      </div>
      <div className="h-[688px] border-2 border-[#e6e6e6] flex flex-col shrink-0">
        <div className="h-[22px] bg-[#f0f0f0] flex items-center pl-[6px] text-[12px] shrink-0 border-b border-[#ddd]">
          <span>名称</span>
          <span className="ml-[18px] w-0 h-0 border-x-[5px] border-b-[5px] border-x-transparent border-b-black" />
        </div>
        <div className="flex-1 overflow-hidden relative flex flex-col text-[12px]">
          <svg width="60" height="290" className="absolute left-0 top-0 z-0" fill="none" stroke="#999" strokeDasharray="1 1">
            <path d="M9.5 10V90M9.5 10H20M9.5 90H20M28.5 30V70M28.5 30H36M28.5 70H40M28.5 90V250M28.5 110H38M28.5 130H38M28.5 150H38M28.5 170H38M28.5 190H38M28.5 210H38M28.5 230H38M28.5 250H38M47.5 40V50H56" />
          </svg>
          <div className="relative">
            <Row pl="pl-[1px]" box st={Chk} ic={<S s={15}><rect x="1" y="3" width="16" height="13" fill="#fff" stroke="#444" /><rect x="6" y="7" width="17" height="14" fill="#fff" stroke="#444" /></S>} text="图纸" />
            <div className="absolute left-[51px] right-0 top-0 h-[20px] border border-dotted border-black pointer-events-none" />
          </div>
          <Row pl="pl-[20px]" box alt st={Chk} ic={Sheet} text={'图纸页 "Sheet 1" (工作的-活动)'} />
          <Row pl="pl-[55px]" st={Chk} ic={<S s={15}><rect x="1" y="2" width="22" height="20" fill="#eee" stroke="#444" /><circle cx="14" cy="13" r="5" fill="#fff" stroke="#444" /></S>} text={'导入的 "FLAT-PATTERN"'} />
          <Row pl="pl-[36px]" alt st={<span className="text-[18px] leading-none text-[#f59a23]">?</span>} ic={<S s={15}><path d="M2 6H9L11 9H22V21H2Z" fill="#fff" stroke="#444" /></S>} text="过时" />
          <Row pl="pl-[1px]" box st={<span className="w-[13px] h-[13px] rounded-full bg-[radial-gradient(circle_at_35%_30%,#d8ffd0,#22c022_60%,#0e8a0e)]" />} ic={<S s={15}><rect x="1" y="1" width="22" height="22" fill="#fff" stroke="#aaa" /><rect x="5" y="5" width="12" height="12" stroke="#444" /><rect x="10" y="10" width="9" height="9" fill={OR} /></S>} text="模型历史记录" />
          <Row pl="pl-[36px]" alt st={Eye} ic={<S s={15}><path d="M12 3V13L4 20M12 13L20 20M4 20H20M12 3L4 20M12 3L20 20" stroke="#d8577a" /></S>} text="基准坐标系 (0)" />
          <Row pl="pl-[36px]" st={Eye} ic={feat} text="拉伸 (2)" />
          <Row pl="pl-[36px]" alt st={Eye} ic={<S s={15}><path d="M2 7L12 2L22 7V17L12 22L2 17Z" fill="#e87a1a" stroke="#8a4a10" /><path d="M7 9L12 7L17 9V15L12 17L7 15Z" fill="#f7b060" /></S>} text="壳 (3)" />
          <Row pl="pl-[36px]" st={Eye} ic={feat} text="拉伸 (4)" />
          <Row pl="pl-[36px]" alt st={Eye} ic={<S s={15}><path d="M2 6C8 2 16 1 22 3M3 12A7 7 0 1 1 12 19L3 12" stroke="#1a9fc8" /><path d="M12 21L22 10L19 8L10 18Z" fill="#f5c040" stroke="#333" /></S>} text={'草图 (5) "SKETCH_000"'} />
          <Row pl="pl-[36px]" st={Eye} ic={<S s={15}><path d="M2 7L12 2L22 7V18L12 22L2 18Z" fill="#bbb" stroke="#666" /><rect x="10" y="8" width="4" height="13" fill={OR} /></S>} text="SB 裂口 (6)" />
          <Row pl="pl-[36px]" alt st={Eye} ic={<S s={15}><path d="M2 6L10 2V18L2 16Z" fill={OR} stroke="#777" /><path d="M14 4L23 21H7Z" fill="#fff" stroke="#222" /><Tx x={15} y={19} size={9}>A</Tx></S>} text="SB 转换为钣金 (7)" />
          <Row pl="pl-[36px]" bold st={Eye} ic={<S s={15}><path d="M2 2H12V12H23V22H2Z" fill="#fff" stroke="#444" /><path d="M2 12H12V22" stroke="#444" /></S>} text="展平图样 (9)" />
          {Array.from({ length: 19 }).map((_, i) => (
            <div key={i} className={`h-[20px] shrink-0 border-b border-[#ececec] ${i % 2 ? "bg-white" : "bg-[#fafafa]"}`} />
          ))}
        </div>
        <div className="h-[15px] bg-[#f0f0f0] flex items-center shrink-0 mb-[1px]">
          <div className="w-[17px] flex justify-center">
            <S s={10}><path d="M16 3L6 12L16 21" stroke="#555" strokeWidth="4" /></S>
          </div>
          <div className="w-[69px] h-full bg-[#c9c9c9]" />
          <div className="ml-auto w-[17px] flex justify-center">
            <S s={10}><path d="M8 3L18 12L8 21" stroke="#555" strokeWidth="4" /></S>
          </div>
        </div>
      </div>
      <div className="h-[5px] mt-[1px] border border-[#a0a0a0] bg-[#dcdcdc] shrink-0" />
      {["搜索", "相关性", "细节", "预览"].map((t) => (
        <div key={t} className="h-[24px] border-b-2 border-[#d0d0d0] flex items-center pl-[10px] text-[14px] text-[#0f6c90] shrink-0">
          <span className="w-0 h-0 border-y-[5px] border-l-[5px] border-y-transparent border-l-[#0f6c90] mr-[9px]" />
          {t}
        </div>
      ))}
    </div>
  );
}

// one quarter of the flat pattern outline, the rest is mirrored around (903, 551)
const MX = 1806;
const MY = 1102;
const tl: number[][] = [
  [639, 477], [662, 455], [669, 451], [727, 451], [727, 454], [729, 456], [736, 456],
  [736, 448], [731, 448], [731, 389], [735, 382], [758, 359],
];
const outline = [
  ...tl,
  ...[...tl].reverse().map(([x, y]) => [MX - x, y]),
  ...tl.map(([x, y]) => [MX - x, MY - y]),
  ...[...tl].reverse().map(([x, y]) => [x, MY - y]),
]
  .map((p) => p.join(","))
  .join(" ");

const OB = "#cf9a35";
const GN = "#0b8c00";
const BR = "#a86400";
const hBands: [number, number, string][] = [
  [381, 6, OB], [382.5, 2.4, GN], [384.9, 1.4, BR], [388, 2, OB],
  [447, 7, OB], [449.5, 2, GN], [451.5, 1.6, BR], [455, 2, OB],
];
const vBands: [number, number, string][] = [
  [660.5, 6, OB], [662.3, 2.4, GN], [664.7, 1.2, BR], [668, 2, OB],
  [727, 7, OB], [729.3, 2, GN], [731.3, 1.6, BR], [735, 2, OB],
];

function Drawing() {
  return (
    <svg width={1661} height={798} viewBox="224 220 1661 798" className="absolute left-0 top-0" fill="none">
      <path d="M1861 220V1018" stroke="#8c8c8c" strokeWidth="1.2" strokeDasharray="13 10" />
      {hBands.map(([y, h, c]) => (
        <g key={`h${y}`} fill={c}>
          <rect x={735} y={y} width={336} height={h} />
          <rect x={735} y={MY - y - h} width={336} height={h} />
        </g>
      ))}
      {vBands.map(([x, w, c]) => (
        <g key={`v${x}`} fill={c}>
          <rect x={x} y={455} width={w} height={192} />
          <rect x={MX - x - w} y={455} width={w} height={192} />
        </g>
      ))}
      <polygon points={outline} stroke="#3366cc" strokeWidth="1.7" />
    </svg>
  );
}

const RightIcons: [string, ReactNode][] = [
  ["h-[29px]", <S key="a" s={26}><path d="M2 13L13 2L19 8L13 14V22H9Z" stroke={OR} /><path d="M5 10L9 14M8 7L12 11" stroke={OR} /><path d="M13 22V14L17 10H23V22Z" stroke={CY} /></S>],
  ["h-[30px]", <S key="b" s={26}><rect x="2" y="2" width="15" height="15" stroke={OR} /><Part x={2} y={2} /><Plus cx={17} cy={17} r={5.5} /></S>],
  ["h-[34px]", <S key="c" s={24}><path d="M1 12C5 6 19 6 23 12C19 18 5 18 1 12Z" stroke="#444" /><circle cx="12" cy="12" r="3.5" stroke="#444" /><path d="M3 21L21 3" stroke="#444" /></S>],
  ["h-[32px]", <S key="d" s={24}><path d="M15 7L18 12L23 12L19 16L21 21L15 18L10 21L11 16L7 12L13 12Z" fill="#f9d94a" stroke="#c8a020" /><path d="M2 11H8M2 15H7M3 19H9" stroke="#5ab0e0" /><path d="M8 8C10 5 14 4 16 6L13 10Z" fill="#e8b080" /><circle cx="19" cy="4" r="2.5" fill="#3a3ab0" /></S>],
  ["h-[32px]", <S key="e" s={24}><path d="M5 2H2V22H5M19 2H22V22H19" stroke={OR} /><path d="M4 12C8 7 16 7 20 12C16 17 8 17 4 12Z" stroke="#444" /><circle cx="12" cy="12" r="3" fill="#444" /></S>],
  ["h-[30px]", <span key="f">{I.hatch}</span>],
  ["h-[33px]", <S key="g" s={26}><Tx x={10} y={22} size={26} fill={OR} bold={false} serif>A</Tx><path d="M23 8L15 16" stroke="#333" strokeWidth="2.4" /><path d="M15 16C13 17 13 20 11 22C15 22 17 20 16.5 17Z" fill="#c9a25a" /></S>],
  ["h-[34px]", <S key="h" s={26}><path d="M3 19V9C7 4 13 2 22 2" stroke={CY} /><path d="M6 14A8 8 0 0 1 18 8" stroke={CY} /><path d="M22 11L17 13L11 20A2.5 2.5 0 0 1 8 17L14 10L16 6" fill="#fff" stroke="#444" /></S>],
  ["h-[31px]", <div key="i" className="w-[24px] h-[16px] border-2 border-[#00a3c7]" />],
  ["h-[26px]", <S key="j" s={24}><rect x="1" y="1" width="20" height="16" fill="#f8f8f8" stroke="#333" /><Plus cx={18} cy={18} r={5.5} /></S>],
];

function RightBar() {
  return (
    <div className="w-[35px] shrink-0 bg-white flex flex-col items-center pt-[12px]">
      {RightIcons.map(([h, ic], i) => (
        <div key={i} className={`${h} flex items-center justify-center`}>
          {ic}
        </div>
      ))}
      <div className="mt-[12px] w-[20px] h-px bg-[#ccc]" />
      <div className="mt-auto mb-[5px] w-0 h-0 border-y-[4px] border-r-[5px] border-y-transparent border-r-black" />
    </div>
  );
}

function Center() {
  return (
    <div className="flex-1 flex flex-col min-w-0">
      <div className="h-[27px] shrink-0 bg-white border-b-2 border-[#00688c] flex">
        <div className="w-[133px] h-[25px] bg-[#00688c] flex items-center text-white text-[12px]">
          <div className="w-[26px] flex justify-center">
            <S s={15}><rect x="2" y="5" width="18" height="17" fill="#333" stroke="#ccc" /><circle cx="11" cy="14" r="4" fill="#9cc" stroke="#fff" /><path d="M10 2H22V5" stroke="#ccc" /></S>
          </div>
          <span className="whitespace-nowrap">钣金测试.prt</span>
          <div className="ml-auto flex items-center pr-[6px] gap-[6px]">
            <S s={13}><path d="M4 2H18V22H4ZM9 8H20M17 5L21 8L17 11" stroke="#fff" strokeWidth="2.4" /></S>
            <S s={10}><path d="M3 3L21 21M21 3L3 21" stroke="#fff" strokeWidth="4.5" /></S>
          </div>
        </div>
      </div>
      <div className="flex-1 relative bg-[#d2d3d5] overflow-hidden">
        <Drawing />
        <div className="absolute left-[12px] bottom-[2px] text-[13px] text-[#f2a65c] font-['Liberation_Sans',sans-serif]">"Sheet 1"</div>
      </div>
    </div>
  );
}

function Ime() {
  return (
    <div className="absolute right-0 bottom-[8px] w-[177px] h-[25px] bg-white border border-[#bcd6ee] flex items-start pt-[2px] text-[#0a6fdc]">
      <div className="absolute left-[-1px] top-[-6px] w-[29px] h-[29px] bg-[#f0501c] rounded-[5px] -rotate-[10deg] flex items-center justify-center text-white text-[24px] font-bold leading-none font-['Liberation_Sans',sans-serif]">
        S
      </div>
      <div className="ml-[32px] w-[24px] text-center text-[18px] font-bold leading-none">中</div>
      <div className="w-[24px] flex justify-center">
        <S s={16}><circle cx="7" cy="8" r="3" fill="#0a6fdc" /><circle cx="17" cy="15" r="2.5" fill="#0a6fdc" /></S>
      </div>
      <div className="w-[25px] flex justify-center">
        <S s={20}><rect x="8" y="1" width="8" height="14" rx="4" fill="#0a6fdc" /><path d="M4 11C4 21 20 21 20 11M12 19V23" stroke="#0a6fdc" strokeWidth="2" /></S>
      </div>
      <div className="w-[25px] flex justify-center">
        <S s={18}><rect x="1" y="3" width="22" height="18" fill="#0a6fdc" /><path d="M4 8H20M4 12H20M4 16H20" stroke="#fff" strokeDasharray="2 1.5" /></S>
      </div>
      <div className="w-[25px] flex justify-center">
        <S s={20}><path d="M7 2L1 6L4 11L6 10V22H18V10L20 11L23 6L17 2L12 5Z" fill="#0a6fdc" /></S>
      </div>
      <div className="w-[23px] flex justify-center">
        <S s={18}><rect x="2" y="2" width="9" height="9" rx="2" fill="#0a6fdc" /><rect x="13" y="2" width="9" height="9" rx="2" fill="#0a6fdc" /><rect x="2" y="13" width="9" height="9" rx="2" fill="#0a6fdc" /><rect x="13" y="13" width="9" height="9" rx="2" fill="#0a6fdc" /></S>
      </div>
      <div className="absolute left-[16px] top-[12px] text-[15px] leading-none whitespace-nowrap text-[#6a6a6a] italic tracking-[1.5px] font-['Liberation_Serif','Noto_Sans_CJK_SC',serif]">
        UG爱好者论坛@wiiikuan
      </div>
    </div>
  );
}

export default function App() {
  return (
    <div className="relative w-[1920px] h-[1048px] overflow-hidden flex flex-col bg-white font-['Noto_Sans','Noto_Sans_CJK_SC',sans-serif]">
      <div className="h-[2px] bg-black shrink-0" />
      <TopBar />
      <Ribbon />
      <Toolbar />
      <div className="flex-1 flex min-h-0">
        <Strip />
        <Nav />
        <Center />
        <RightBar />
      </div>
      <div className="h-[22px] shrink-0 border-t border-[#a8a8a8] bg-white flex items-center pl-[3px] text-[11px] font-medium text-[#111]">
        选择对象并使用 MB3，或双击，或按住并拖动来移动视图、尺寸或注释
      </div>
      <div className="h-[8px] shrink-0 bg-[#1d3542] flex overflow-hidden">
        <div className="ml-[296px] w-[48px] bg-[#4a5f6c]" />
        <div className="ml-[1436px] text-white text-[14px] leading-none mt-[4px]">11:19</div>
      </div>
      <Ime />
    </div>
  );
}
